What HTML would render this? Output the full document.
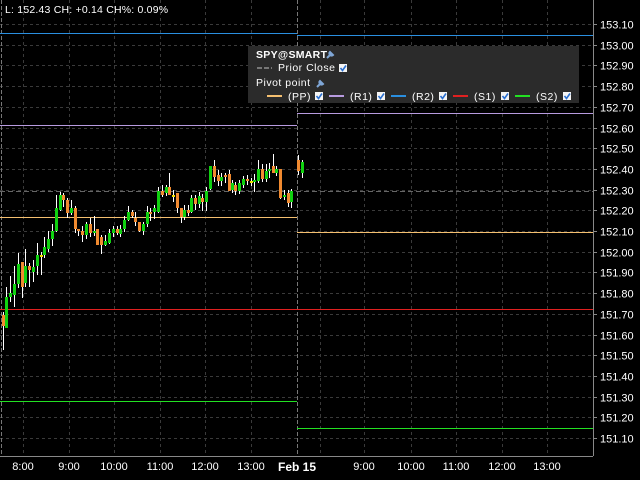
<!DOCTYPE html>
<html><head><meta charset="utf-8"><style>
html,body{margin:0;padding:0;background:#000;width:640px;height:480px;overflow:hidden}
svg{display:block}
text{font-family:"Liberation Sans",sans-serif;fill:#fff}
</style></head><body>
<svg id="s" width="640" height="480" xmlns="http://www.w3.org/2000/svg">
<rect width="640" height="480" fill="#000"/>
<g id="grid" stroke="#3a3a3a" stroke-width="1" stroke-dasharray="3,3"></g>
<line x1="1.5" y1="0" x2="1.5" y2="456" stroke="#777" stroke-dasharray="4,2"/>
<line x1="297.5" y1="0" x2="297.5" y2="456" stroke="#777" stroke-dasharray="4,2"/>
<line x1="0" y1="191.5" x2="593" y2="191.5" stroke="#666" stroke-dasharray="5,3"/>
<line x1="0" y1="33.5" x2="297" y2="33.5" stroke="#2a8fe0"/>
<line x1="297" y1="35.5" x2="593" y2="35.5" stroke="#2a8fe0"/>
<line x1="0" y1="125.5" x2="297" y2="125.5" stroke="#b89be0"/>
<line x1="297" y1="113.5" x2="593" y2="113.5" stroke="#b89be0"/>
<line x1="0" y1="217.5" x2="297" y2="217.5" stroke="#f5c070"/>
<line x1="297" y1="232.5" x2="593" y2="232.5" stroke="#f5c070"/>
<line x1="0" y1="309.5" x2="593" y2="309.5" stroke="#e02020"/>
<line x1="0" y1="401.5" x2="297" y2="401.5" stroke="#22e022"/>
<line x1="297" y1="428.5" x2="593" y2="428.5" stroke="#22e022"/>
<g id="c"></g>
<line x1="593.5" y1="0" x2="593.5" y2="456" stroke="#888"/>
<line x1="0" y1="456.5" x2="593" y2="456.5" stroke="#888"/>
<g id="ax" font-size="11"></g>
<text x="5" y="13" font-size="10.5" letter-spacing="0.2">L: 152.43 CH: +0.14 CH%: 0.09%</text>
<rect x="248" y="46" width="331" height="57" fill="#2b2b2b"/>
<text x="256" y="58" font-size="10.5" font-weight="bold" letter-spacing="0.3" fill="#fff">SPY@SMART</text>
<path d="M327 58 l4 -4 m-1 -2 a2 2 0 1 0 3 3 z" stroke="#7fa6d6" stroke-width="2" fill="#7fa6d6"/>
<line x1="257" y1="68" x2="272" y2="68" stroke="#777" stroke-width="2" stroke-dasharray="5,2"/>
<text x="278" y="71" font-size="10.5" letter-spacing="0.5">Prior Close</text>
<text x="256" y="86" font-size="10.5" letter-spacing="0.5">Pivot point</text>
<path d="M317 87 l4 -4 m-1 -2 a2 2 0 1 0 3 3 z" stroke="#7fa6d6" stroke-width="2" fill="#7fa6d6"/>
<g id="leg" font-size="10.5" letter-spacing="0.5"></g>
</svg>
<script>
var NS="http://www.w3.org/2000/svg";
function el(p,t,a){var e=document.createElementNS(NS,t);for(var k in a)e.setAttribute(k,a[k]);p.appendChild(e);return e;}
var g=document.getElementById('grid');
var prices=["153.10","153.00","152.90","152.80","152.70","152.60","152.50","152.40","152.30","152.20","152.10","152.00","151.90","151.80","151.70","151.60","151.50","151.40","151.30","151.20","151.10"];
var ax=document.getElementById('ax');
prices.forEach(function(p,i){var y=Math.round(24+i*20.7)+0.5;
 el(g,'line',{x1:0,y1:y,x2:593,y2:y});
 el(ax,'line',{x1:593,y1:y,x2:597,y2:y,stroke:'#888'});
 var t=el(ax,'text',{x:600,y:y+4});t.textContent=p;});
[[23,"8:00"],[69,"9:00"],[114,"10:00"],[160,"11:00"],[205,"12:00"],[251,"13:00"],[320,""],[364,"9:00"],[411,"10:00"],[456,"11:00"],[502,"12:00"],[547,"13:00"]].forEach(function(v){
 el(g,'line',{x1:v[0]+.5,y1:0,x2:v[0]+.5,y2:456});
 if(v[1]){var t=el(ax,'text',{x:v[0],y:470,'text-anchor':'middle'});t.textContent=v[1];}});
var fb=el(ax,'text',{x:297,y:471,'text-anchor':'middle','font-weight':'bold','font-size':'12'});fb.textContent="Feb 15";
var O='#f08a30',G='#10d010',Y='#f0e000';
var C=[[3,315,326,312,350,O],[6,297,328,287,328,G],[10,293,297,276,302,G],[14,284,295,266,307,G],[18,264,284,253,288,G],[22,262,287,262,298,O],[25,266,283,249,287,G],[29,266,270,263,287,O],[33,267,272,260,282,G],[37,255,266,243,275,G],[41,255,256,252,275,Y],[44,247,255,237,258,G],[48,239,249,231,252,G],[52,231,239,224,246,G],[56,208,231,195,232,G],[60,195,210,192,211,G],[63,195,200,193,207,O],[67,200,213,198,218,O],[71,208,213,200,215,G],[75,208,229,206,233,O],[78,229,231,229,236,O],[82,231,235,226,242,O],[86,224,235,222,239,G],[90,224,233,218,237,O],[94,231,233,216,236,G],[97,229,245,229,244,O],[101,237,245,235,254,O],[105,241,245,235,246,G],[109,233,243,229,244,G],[113,229,233,226,237,G],[117,229,233,226,235,O],[120,229,234,225,237,G],[124,220,229,216,232,G],[128,212,220,206,221,G],[132,212,216,210,218,O],[135,218,222,212,226,O],[139,222,231,222,232,O],[143,224,231,222,235,G],[147,212,224,206,227,G],[150,212,214,208,221,O],[154,208,212,205,219,G],[158,191,212,187,213,G],[162,191,195,185,197,O],[166,187,193,185,196,G],[169,187,195,173,195,O],[173,195,197,190,202,Y],[177,193,208,193,213,O],[181,208,217,208,223,O],[184,210,217,205,220,G],[188,210,213,205,216,O],[191,198,212,195,213,G],[195,198,204,195,210,O],[199,196,204,192,208,G],[202,198,202,194,211,O],[206,191,202,187,211,G],[210,166,189,166,190,G],[214,166,177,160,182,O],[218,175,181,170,186,O],[221,177,181,173,186,G],[225,175,177,173,183,O],[229,174,191,170,191,O],[232,183,190,180,193,G],[235,185,191,182,195,O],[239,183,191,180,194,G],[243,179,185,176,188,G],[247,179,181,175,185,O],[251,181,182,178,186,Y],[254,180,182,174,192,G],[258,169,181,160,183,G],[262,169,179,164,182,O],[266,171,179,164,182,G],[269,169,171,163,178,G],[273,166,173,154,173,O],[276,169,173,166,176,G],[280,169,198,169,199,O],[284,195,197,190,200,G],[288,193,203,190,207,O],[291,191,202,189,208,G],[298,160,171,155,175,O],[302,162,173,160,178,G]];
var c=document.getElementById('c');
C.forEach(function(v){el(c,'line',{x1:v[0]+.5,y1:v[3],x2:v[0]+.5,y2:v[4],stroke:'#fff'});
 el(c,'rect',{x:v[0]-1,y:v[1],width:3,height:Math.max(2,v[2]-v[1]),fill:v[5]});});
var leg=document.getElementById('leg');
function cb(x,y){el(leg,'rect',{x:x,y:y,width:8,height:8,fill:'#f4f4f4'});
 el(leg,'path',{d:'M'+(x+1.5)+' '+(y+4)+' l2 2.5 l3.5 -5',stroke:'#2a6fd0','stroke-width':1.6,fill:'none'});}
cb(339,64);
[[265,"#f5c070","(PP)"],[327,"#b89be0","(R1)"],[389,"#2a8fe0","(R2)"],[451,"#e02020","(S1)"],[513,"#22e022","(S2)"]].forEach(function(v){
 el(leg,'line',{x1:v[0]+2,y1:96,x2:v[0]+17,y2:96,stroke:v[1],'stroke-width':2});
 var t=el(leg,'text',{x:v[0]+23,y:100});t.textContent=v[2];
 cb(v[0]+50,92);});
</script>
</body></html>
